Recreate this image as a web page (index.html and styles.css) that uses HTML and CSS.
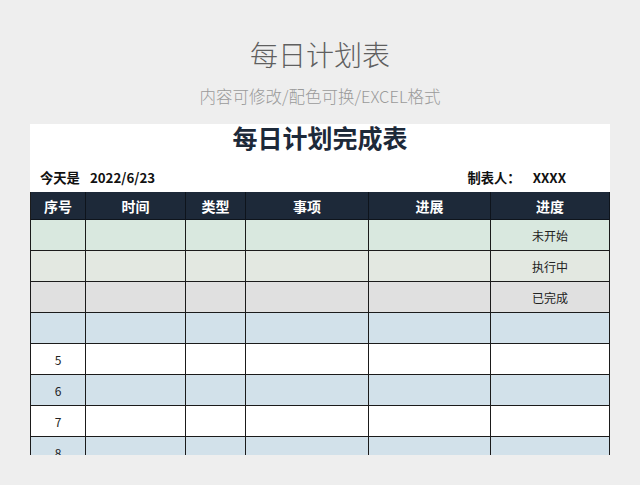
FILE: index.html
```html
<!DOCTYPE html>
<html lang="zh">
<head>
<meta charset="utf-8">
<link rel="stylesheet" href="styles.css">
</head>
<body>
<div class="page">
  <h1 class="title">每日计划表</h1>
  <p class="subtitle">内容可修改/配色可换/EXCEL格式</p>
  <div class="card">
    <h2 class="card-title">每日计划完成表</h2>
    <div class="info">
      <div class="info-left"><span>今天是</span><span class="date">2022/6/23</span></div>
      <div class="info-right"><span>制表人：</span><span class="maker">XXXX</span></div>
    </div>
    <div class="grid">
      <div class="row head"><div>序号</div><div>时间</div><div>类型</div><div>事项</div><div>进展</div><div>进度</div></div>
      <div class="row green"><div></div><div></div><div></div><div></div><div></div><div>未开始</div></div>
      <div class="row sage"><div></div><div></div><div></div><div></div><div></div><div>执行中</div></div>
      <div class="row grey"><div></div><div></div><div></div><div></div><div></div><div>已完成</div></div>
      <div class="row blue"><div></div><div></div><div></div><div></div><div></div><div></div></div>
      <div class="row white"><div>5</div><div></div><div></div><div></div><div></div><div></div></div>
      <div class="row blue"><div>6</div><div></div><div></div><div></div><div></div><div></div></div>
      <div class="row white"><div>7</div><div></div><div></div><div></div><div></div><div></div></div>
      <div class="row blue"><div>8</div><div></div><div></div><div></div><div></div><div></div></div>
    </div>
  </div>
</div>
</body>
</html>
```

FILE: styles.css
```css
* { box-sizing: border-box; }
html, body { margin: 0; padding: 0; }
body {
  background: #eeeeee;
  font-family: "Noto Sans CJK SC", "Noto Sans", sans-serif;
  width: 640px;
  height: 485px;
  overflow: hidden;
}
.page {
  display: flex;
  flex-direction: column;
  align-items: center;
  padding-top: 34px;
}
.title {
  margin: 0;
  font-size: 28px;
  line-height: 40px;
  font-weight: 300;
  color: #5f5f5f;
}
.subtitle {
  margin: 12px 0 0 0;
  font-size: 16.5px;
  line-height: 20px;
  font-weight: 300;
  color: #9a9a9a;
}
.card {
  margin-top: 18px;
  width: 580px;
  height: 331px;
  overflow: hidden;
  background: #ffffff;
  align-self: flex-start;
  margin-left: 30px;
}
.card-title {
  margin: 0;
  height: 26px;
  line-height: 26px;
  text-align: center;
  font-size: 25px;
  font-weight: 700;
  color: #1d2939;
}
.info {
  height: 42px;
  display: flex;
  justify-content: space-between;
  align-items: flex-end;
  padding: 0 44px 5px 10px;
  font-size: 13.3px;
  line-height: 18px;
  font-weight: 700;
  color: #111;
}
.info .date { margin-left: 10px; }
.info .maker { margin-left: 12px; }
.grid {
  border-left: 1px solid #1b1b1b;
}
.row {
  display: grid;
  grid-template-columns: 55px 100px 60px 123px 122px 119px;
  height: 31px;
}
.row > div {
  border-right: 1px solid #1b1b1b;
  border-bottom: 1px solid #1b1b1b;
  display: flex;
  align-items: center;
  justify-content: center;
  font-size: 12px;
  color: #222;
}
.row.head {
  height: 28px;
  background: #1d2939;
}
.row.head > div {
  color: #ffffff;
  font-size: 14px;
  font-weight: 700;
  border-color: #0e141c;
}
.green { background: #d9e8df; }
.sage { background: #e3e8e1; }
.grey { background: #e0e0e0; }
.blue { background: #d2e1ea; }
.white { background: #ffffff; }
```
